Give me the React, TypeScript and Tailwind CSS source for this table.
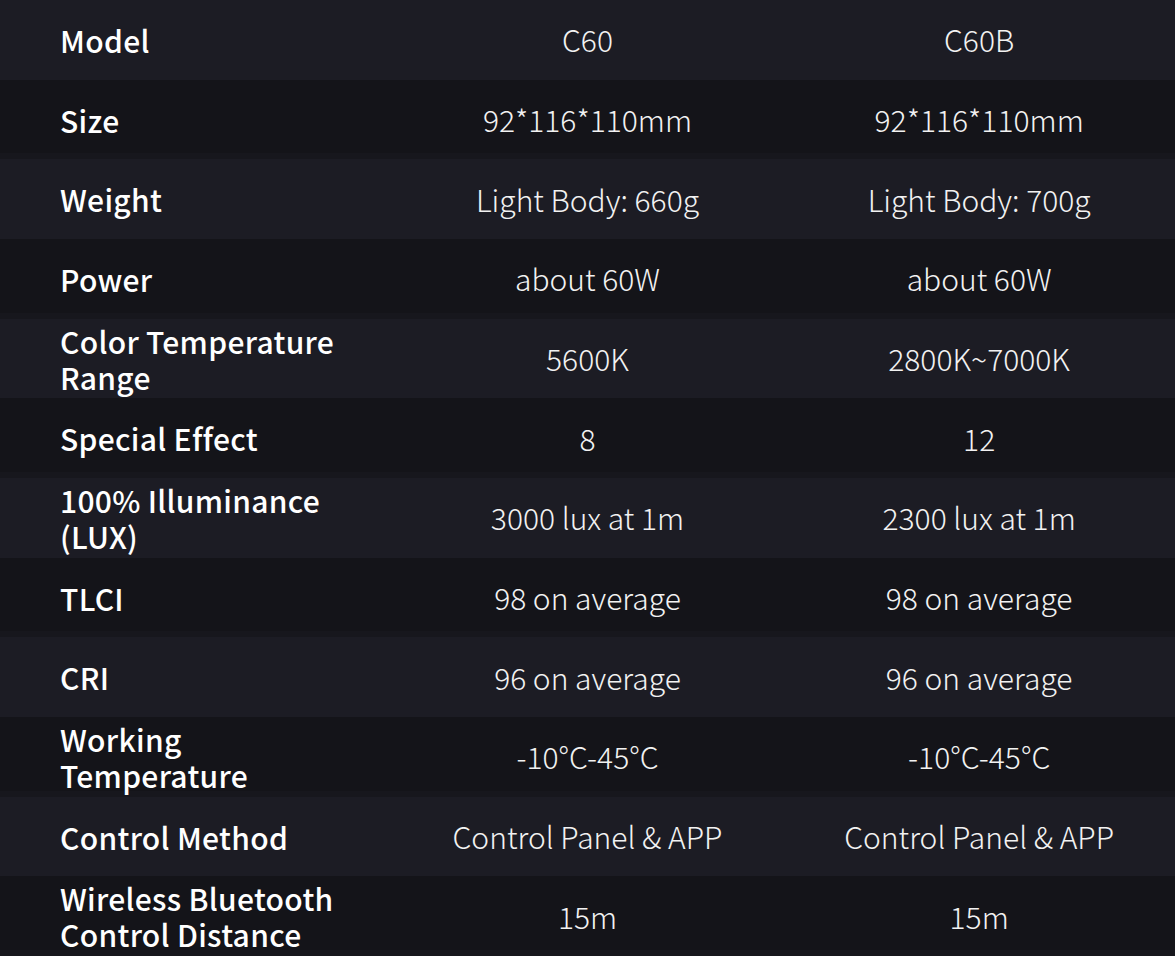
import React from 'react';

const rows: [string, string, string][] = [
    ['Model', 'C60', 'C60B'],
    ['Size', '92*116*110mm', '92*116*110mm'],
    ['Weight', 'Light Body: 660g', 'Light Body: 700g'],
    ['Power', 'about 60W', 'about 60W'],
    ['Color Temperature Range', '5600K', '2800K~7000K'],
    ['Special Effect', '8', '12'],
    ['100% Illuminance (LUX)', '3000 lux at 1m', '2300 lux at 1m'],
    ['TLCI', '98 on average', '98 on average'],
    ['CRI', '96 on average', '96 on average'],
    ['Working Temperature', '-10°C-45°C', '-10°C-45°C'],
    ['Control Method', 'Control Panel & APP', 'Control Panel & APP'],
    ['Wireless Bluetooth Control Distance', '15m', '15m'],
];

export default function App() {
    return (
        <div
            className="w-[1175px] h-[956px] flex flex-col text-white overflow-hidden"
            style={{ fontFamily: '"Noto Sans CJK SC", "Noto Sans", sans-serif' }}
        >
            {rows.map(([label, a, b], i) => (
                <div
                    key={label}
                    className={`flex-1 grid grid-cols-3 items-center ${i % 2 === 0 ? 'bg-[#1c1c24]' : 'bg-[#141419] shadow-[inset_0_-6px_0_#17171d]'}`}
                >
                    <div className="pl-[60px]">
                        <div className="max-w-[290px] text-[30px] leading-[36px] font-medium tracking-[0.3px]">{label}</div>
                    </div>
                    <div className="text-center text-[30px] font-light text-[#f2f2f2]">{a}</div>
                    <div className="text-center text-[30px] font-light text-[#f2f2f2]">{b}</div>
                </div>
            ))}
        </div>
    );
}
